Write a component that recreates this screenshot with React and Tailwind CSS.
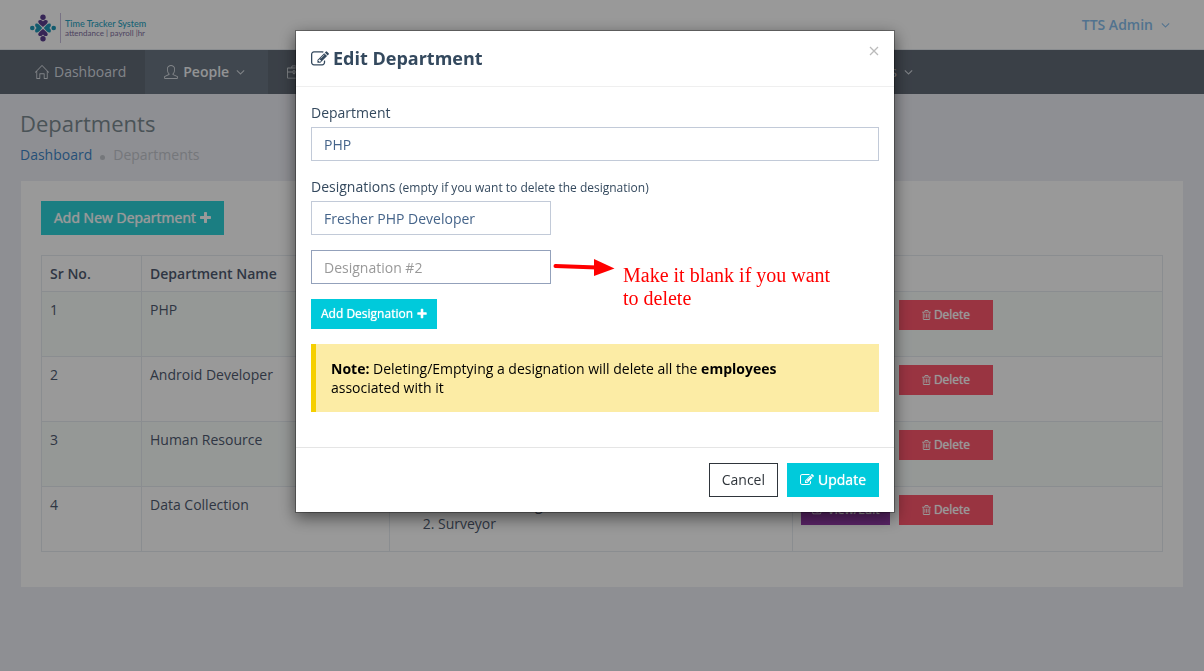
import { useState } from "react";
import { SlHome, SlUser, SlBriefcase } from "react-icons/sl";

function PencilSquare({ className }) {
  return (
    <svg viewBox="0 0 1792 1792" fill="currentColor" aria-hidden="true" className={className}>
      <path d="M888 1184l116-116-152-152-116 116v56h96v96h56zm440-720q-16-16-33 1l-350 350q-17 17-1 33t33-1l350-350q17-17 1-33zm80 594v190q0 119-84.5 203.5t-203.5 84.5h-832q-119 0-203.5-84.5t-84.5-203.5v-832q0-119 84.5-203.5t203.5-84.5h832q63 0 117 25 15 7 18 23 3 17-9 29l-49 49q-14 14-32 8-23-6-45-6h-832q-66 0-113 47t-47 113v832q0 66 47 113t113 47h832q66 0 113-47t47-113v-126q0-13 9-22l64-64q15-15 35-7t20 29zm-96-738l288 288-672 672h-288v-288zm444 132l-92 92-288-288 92-92q28-28 68-28t68 28l152 152q28 28 28 68t-28 68z" />
    </svg>
  );
}

function Trash({ className }) {
  return (
    <svg viewBox="192 0 1408 1792" fill="currentColor" aria-hidden="true" className={className}>
      <path d="M704 736v576q0 14-9 23t-23 9h-64q-14 0-23-9t-9-23v-576q0-14 9-23t23-9h64q14 0 23 9t9 23zm256 0v576q0 14-9 23t-23 9h-64q-14 0-23-9t-9-23v-576q0-14 9-23t23-9h64q14 0 23 9t9 23zm256 0v576q0 14-9 23t-23 9h-64q-14 0-23-9t-9-23v-576q0-14 9-23t23-9h64q14 0 23 9t9 23zm128 724v-948h-896v948q0 22 7 40.5t14.5 27 10.5 8.5h832q3 0 10.5-8.5t14.5-27 7-40.5zm-672-1076h448l-48-117q-7-9-17-11h-317q-10 2-17 11zm928 32v64q0 14-9 23t-23 9h-96v948q0 83-47 143.5t-113 60.5h-832q-66 0-113-58.5t-47-141.5v-952h-96q-14 0-23-9t-9-23v-64q0-14 9-23t23-9h309l70-167q15-37 54-63t79-26h320q40 0 79 26t54 63l70 167h309q14 0 23 9t9 23z" />
    </svg>
  );
}

function Plus({ className }) {
  return (
    <svg viewBox="192 0 1408 1792" fill="currentColor" aria-hidden="true" className={className}>
      <path d="M1600 736v192q0 40-28 68t-68 28h-416v416q0 40-28 68t-68 28h-192q-40 0-68-28t-28-68v-416h-416q-40 0-68-28t-28-68v-192q0-40 28-68t68-28h416v-416q0-40 28-68t68-28h192q40 0 68 28t28 68v416h416q40 0 68 28t28 68z" />
    </svg>
  );
}

function AngleDown({ className }) {
  return (
    <svg viewBox="320 0 1152 1792" fill="currentColor" aria-hidden="true" className={className}>
      <path d="M1395 736q0 13-10 23l-466 466q-10 10-23 10t-23-10l-466-466q-10-10-10-23t10-23l50-50q10-10 23-10t23 10l393 393 393-393q10-10 23-10t23 10l50 50q10 10 10 23z" />
    </svg>
  );
}

function Logo() {
  return (
    <a href="#" className="flex items-center font-[Lato,sans-serif]">
      <svg viewBox="0 0 26 28" aria-hidden="true" className="h-7 w-[26px]">
        <g fill="#5b3f8f">
          <circle cx="13" cy="3.200" r="2.700" />
          <path d="M8.400 6.800c1-1.400 3.400-1.200 4.600 .6c1.200-1.800 3.600-2 4.600-.6c.8 2-1.600 3.800-4.600 6.200c-3-2.400-5.400-4.200-4.600-6.200z" />
          <circle cx="13" cy="24.800" r="2.700" />
          <path d="M8.400 21.200c1 1.400 3.400 1.200 4.600-.6c1.200 1.800 3.600 2 4.600 .6c.8-2-1.600-3.800-4.600-6.200c-3 2.400-5.400 4.200-4.600 6.200z" />
        </g>
        <g fill="#1f98b8">
          <circle cx="2.300" cy="14" r="2.300" />
          <path d="M5.800 9.600c-1.200 1-.8 3.200 .8 4.400c-1.600 1.200-2 3.400-.8 4.400c2 .8 4-1.600 6.400-4.400c-2.400-2.800-4.400-5.200-6.400-4.400z" />
          <circle cx="23.700" cy="14" r="2.300" />
          <path d="M20.200 9.600c1.200 1 .8 3.200-.8 4.400c1.600 1.200 2 3.400 .8 4.400c-2 .8-4-1.600-6.400-4.400c2.400-2.800 4.400-5.200 6.400-4.400z" />
        </g>
      </svg>
      <span className="ml-1 flex h-[30px] flex-col justify-center border-l border-[#c9bedd] pl-1">
        <span className="text-[9px] leading-[10px] font-medium text-[#2ba5c4]">Time Tracker System</span>
        <span className="text-[8px] leading-[8px] text-[#7f709f]">attendance | payroll |hr</span>
      </span>
    </a>
  );
}

const navLink = "flex h-11 items-center text-sm";
const buttonText = "text-white [text-shadow:0_0_1px_currentColor]";

function TopBar() {
  return (
    <header>
      <div className="flex h-[50px] items-center justify-between border-b border-[#e7ebf0] bg-white pr-[34px] pl-[30px]">
        <div className="pt-[6px]"><Logo /></div>
        <button type="button" className="flex items-center gap-2 text-sm font-semibold text-[#88bfee]">
          TTS Admin
          <AngleDown className="h-[14px] w-[9px]" />
        </button>
      </div>
      <nav className="bg-[#626b77]">
        <ul className="flex w-[932px] max-w-full text-[#d8dde3]">
          <li>
            <a href="#" className={`${navLink} gap-[5px] pr-[19px] pl-[35px]`}>
              <SlHome className="size-[14px]" />
              Dashboard
            </a>
          </li>
          <li className="bg-[#6b7784] font-semibold text-[#f4f6f8]">
            <a href="#" className={`${navLink} gap-[5px] pr-[23px] pl-[19px]`}>
              <SlUser className="size-[14px] text-[#d8dde3]" />
              People
              <AngleDown className="ml-[2px] h-[14px] w-[9px] text-[#d8dde3]" />
            </a>
          </li>
          <li>
            <a href="#" className={`${navLink} gap-[5px] px-[19px]`}>
              <SlBriefcase className="size-[14px]" />
              HR
            </a>
          </li>
          <li className="ml-auto">
            <a href="#" className={`${navLink} gap-[7px] px-[19px]`}>
              Settings
              <AngleDown className="h-[14px] w-[9px]" />
            </a>
          </li>
        </ul>
      </nav>
    </header>
  );
}

const departments = [
  { id: 1, name: "PHP", designations: ["Fresher PHP Developer"] },
  { id: 2, name: "Android Developer", designations: ["Android Developer"] },
  { id: 3, name: "Human Resource", designations: ["HR"] },
  { id: 4, name: "Data Collection", designations: ["Data Processing", "Surveyor"] },
];

const headCell = "border border-[#e7ecf1] px-2 pt-2 pb-[7px] text-left align-top font-semibold";
const cell = "border border-[#e7ecf1] p-2 text-left align-top";

function DepartmentTable() {
  return (
    <table className="mt-5 w-full table-fixed border-collapse text-sm leading-5 text-[#4f5b70]">
      <colgroup>
        <col className="w-[100px]" />
        <col className="w-[248px]" />
        <col className="w-[403px]" />
        <col />
      </colgroup>
      <thead>
        <tr>
          <th className={headCell}>Sr No.</th>
          <th className={headCell}>Department Name</th>
          <th className={headCell}>Designations</th>
          <th className={headCell}>Action</th>
        </tr>
      </thead>
      <tbody>
        {departments.map((d) => (
          <tr key={d.id} className="h-[65px] odd:bg-[#f9fdfb]">
            <td className={cell}>{d.id}</td>
            <td className={cell}>{d.name}</td>
            <td className={cell}>
              <ol className="list-decimal pl-10 leading-[19px]">
                {d.designations.map((name) => (
                  <li key={name}>{name}</li>
                ))}
              </ol>
            </td>
            <td className={cell}>
              <div className="flex gap-[9px] text-xs">
                <button type="button" className={`flex h-[30px] w-[89px] items-center justify-center gap-1 bg-[#963cab] ${buttonText}`}>
                  <PencilSquare className="size-3" />
                  View/Edit
                </button>
                <button type="button" className={`flex h-[30px] w-[94px] items-center justify-center gap-[3px] bg-[#ff576d] ${buttonText}`}>
                  <Trash className="h-3 w-[9px]" />
                  Delete
                </button>
              </div>
            </td>
          </tr>
        ))}
      </tbody>
    </table>
  );
}

const field = "block h-[34px] border bg-white px-3 text-sm text-[#45648a] outline-none placeholder:text-[#999]";

function DeleteHint() {
  return (
    <div className="pointer-events-none absolute top-2 left-[242px] flex w-[300px] gap-2">
      <svg viewBox="0 0 62 20" aria-hidden="true" className="h-5 w-[62px] shrink-0 text-[#ff0000]">
        <path d="M2.500 8L44 9.500" stroke="currentColor" strokeWidth="4" strokeLinecap="round" />
        <path d="M41 1L61.500 10.500L41 18z" fill="currentColor" />
      </svg>
      <p className="pt-[6px] font-['Liberation_Serif',serif] text-[20px] leading-[23px] text-[#ff0000]">
        Make it blank if you want
        <br />
        to delete
      </p>
    </div>
  );
}

function EditDepartment() {
  const [department, setDepartment] = useState("PHP");
  const [first, setFirst] = useState("Fresher PHP Developer");
  const [second, setSecond] = useState("");

  return (
    <div className="fixed inset-0 flex items-start justify-center overflow-hidden bg-black/40 pt-[30px] pr-[14px]">
      <section
        role="dialog"
        aria-modal="true"
        aria-labelledby="dialog-title"
        className="w-full max-w-[600px] border border-black/30 bg-white bg-clip-padding text-sm leading-5 text-[#34495e] shadow-[0_5px_15px_rgba(0,0,0,0.5)]"
      >
        <div className="flex items-start justify-between border-b border-[#efefef] p-[15px]">
          <h2 id="dialog-title" className="flex items-center gap-1 text-lg leading-[25px] font-bold">
            <PencilSquare className="size-[18px]" />
            Edit Department
          </h2>
          <button type="button" aria-label="Close" className="text-[#bbb]">
            <svg viewBox="0 0 10 10" aria-hidden="true" className="size-[10px]">
              <path d="M1 1l8 8M9 1l-8 8" stroke="currentColor" strokeWidth="1.300" />
            </svg>
          </button>
        </div>
        <form className="px-[15px] pt-4 pb-[35px]">
          <label htmlFor="department" className="mb-1 block">Department</label>
          <input
            id="department"
            value={department}
            onChange={(e) => setDepartment(e.target.value)}
            className={`${field} w-full border-[#c2cad8]`}
          />
          <label htmlFor="designation-1" className="mt-4 mb-1 block">
            Designations <span className="text-xs">(empty if you want to delete the designation)</span>
          </label>
          <input
            id="designation-1"
            value={first}
            onChange={(e) => setFirst(e.target.value)}
            className={`${field} w-60 border-[#c2cad8]`}
          />
          <div className="relative mt-[15px]">
            <input
              aria-label="Designation #2"
              placeholder="Designation #2"
              value={second}
              onChange={(e) => setSecond(e.target.value)}
              className={`${field} w-60 border-[#93a1bb]`}
            />
            <DeleteHint />
          </div>
          <button type="button" className={`mt-[15px] flex h-[30px] items-center gap-1 bg-[#00cadb] px-[10px] text-xs ${buttonText}`}>
            Add Designation
            <Plus className="h-3 w-[10px]" />
          </button>
          <p className="mt-[15px] border-l-[5px] border-[#f5cf00] bg-[#fceca5] p-[15px] leading-[19px] text-black">
            <b>Note:</b> Deleting/Emptying a designation will delete all the <b>employees</b>
            <br />
            associated with it
          </p>
        </form>
        <div className="flex justify-end gap-[9px] border-t border-[#e5e5e5] p-[15px]">
          <button type="button" className="h-[34px] border border-[#2f353b] px-3 text-[#2f353b]">Cancel</button>
          <button type="button" className={`flex h-[34px] items-center gap-1 bg-[#00cadb] px-[13px] ${buttonText}`}>
            <PencilSquare className="size-[14px]" />
            Update
          </button>
        </div>
      </section>
    </div>
  );
}

export default function App() {
  return (
    <div className="min-h-screen bg-[#edeef5] font-['Open_Sans',sans-serif]">
      <TopBar />
      <main className="px-5 pt-[14px] pb-10">
        <h1 className="text-[22px] leading-[30px] text-[#7c8b92]">Departments</h1>
        <nav aria-label="Breadcrumb" className="mt-[7px] flex items-center gap-2 text-sm leading-5">
          <a href="#" className="text-[#3f86c8]">Dashboard</a>
          <span className="mt-1 size-[5px] rounded-full bg-[#c3c7cd]" />
          <span className="text-[#c3c7cd]">Departments</span>
        </nav>
        <div className="mx-px mt-4 bg-white p-5 pb-[35px]">
          <button type="button" className={`flex h-[34px] items-center gap-1 bg-[#2dd3d9] px-[13px] text-sm ${buttonText}`}>
            Add New Department
            <Plus className="h-[14px] w-[11px]" />
          </button>
          <DepartmentTable />
        </div>
      </main>
      <EditDepartment />
    </div>
  );
}
